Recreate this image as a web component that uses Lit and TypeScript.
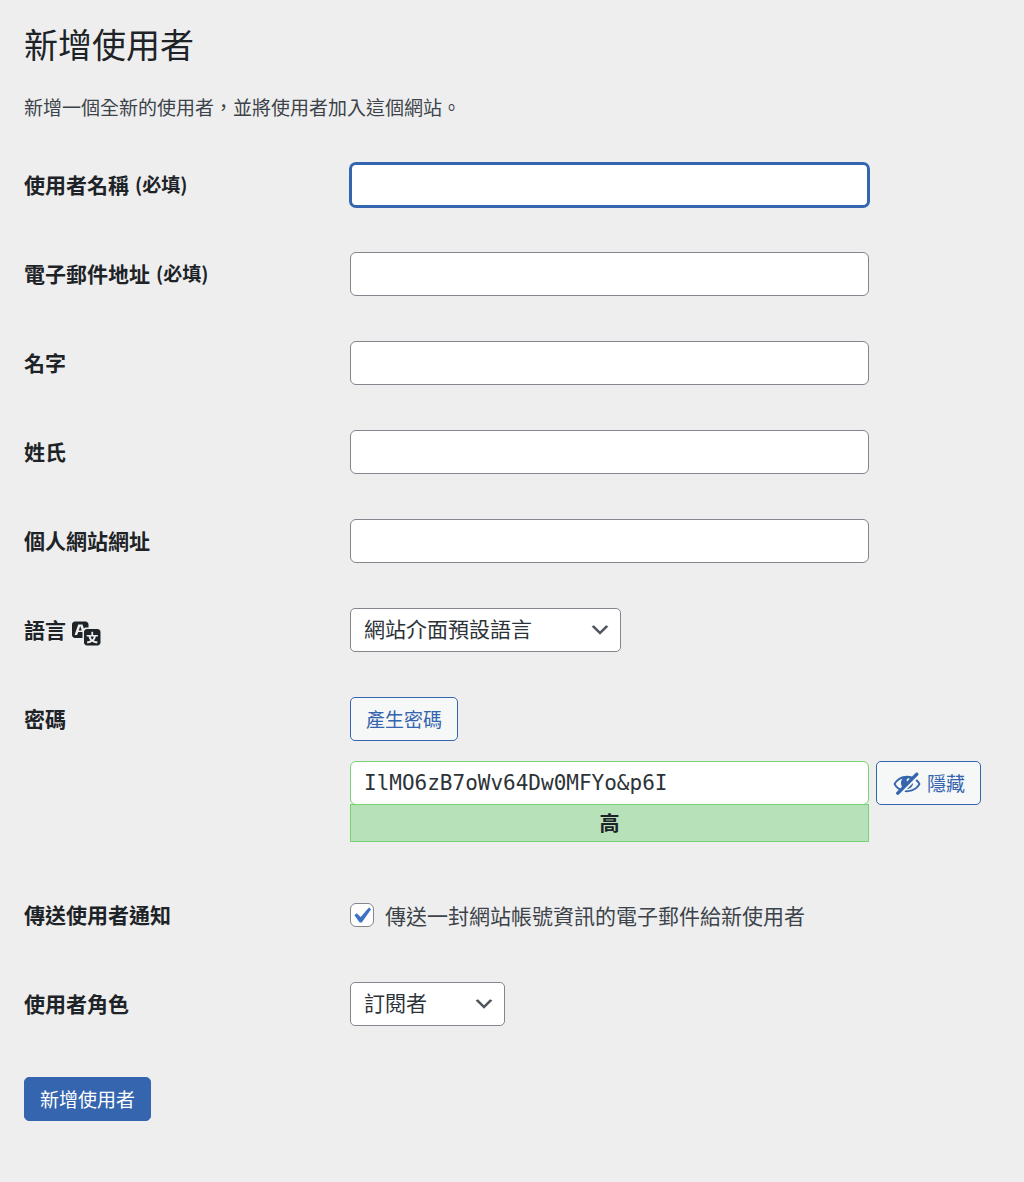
import { LitElement, html, css, svg } from "lit";
import { customElement, state } from "lit/decorators.js";
import { classMap } from "lit/directives/class-map.js";

interface TextField {
  id: string;
  label: string;
  type: string;
  required: boolean;
}

const TEXT_FIELDS: TextField[] = [
  { id: "user_login", label: "使用者名稱", type: "text", required: true },
  { id: "email", label: "電子郵件地址", type: "email", required: true },
  { id: "first_name", label: "名字", type: "text", required: false },
  { id: "last_name", label: "姓氏", type: "text", required: false },
  { id: "url", label: "個人網站網址", type: "url", required: false },
];

const translationIcon = svg`<path fill-rule="evenodd" d="M11 7H9.49c-.63 0-1.25.3-1.59.7L7 5H4.13l-2.39 7h1.69l.74-2H7v4H2c-1.1 0-2-.9-2-2V5c0-1.1.9-2 2-2h7c1.1 0 2 .9 2 2v2zM6.51 9H4.49l1-2.93zM10 8h7c1.1 0 2 .9 2 2v7c0 1.1-.9 2-2 2h-7c-1.1 0-2-.9-2-2v-7c0-1.1.9-2 2-2zm7.25 5v-1.08h-3.17V9.75h-1.16v2.17H9.75V13h1.28c.11.85.56 1.85 1.28 2.62-.87.36-1.89.62-2.31.62-.01.02.22.97.2 1.46.84 0 2.21-.5 3.28-1.15 1.09.65 2.48 1.15 3.34 1.15-.02-.49.2-1.44.2-1.46-.43 0-1.49-.27-2.38-.63.7-.77 1.14-1.77 1.25-2.61h1.36zm-3.81 1.93c-.5-.46-.85-1.13-1.01-1.93h2.09c-.17.8-.51 1.47-1 1.93l-.04.03s-.03-.02-.04-.03z"/>`;

const hiddenIcon = svg`<path d="M17.2 3.3l.16.17c.39.39.39 1.02 0 1.41L4.55 17.7c-.39.39-1.03.39-1.41 0l-.17-.17c-.39-.39-.39-1.02 0-1.41l1.59-1.6c-1.57-1-2.76-2.3-3.56-3.93.81-1.65 2.03-2.98 3.64-3.99S8.04 5.09 10 5.09c1.2 0 2.33.21 3.4.6l2.38-2.39c.39-.39 1.03-.39 1.42 0zm-7.09 4.01c-.23.25-.34.54-.34.88 0 .31.12.58.31.81l1.8-1.79c-.13-.12-.28-.21-.45-.26-.11-.01-.28-.03-.49-.04-.33.03-.6.16-.83.4zM2.4 10.59c.69 1.23 1.71 2.25 3.05 3.05l1.28-1.28c-.51-.69-.77-1.47-.77-2.36 0-1.06.36-1.98 1.09-2.76-1.04.27-1.96.7-2.76 1.26-.8.58-1.43 1.27-1.89 2.09zm13.22-2.13l.96-.96c1.02.86 1.83 1.89 2.42 3.09-.81 1.65-2.03 2.98-3.64 3.99s-3.4 1.51-5.36 1.51c-.63 0-1.24-.07-1.83-.18l1.07-1.07c.25.02.5.05.76.05 1.63 0 3.13-.4 4.5-1.21s2.4-1.84 3.1-3.09c-.46-.82-1.09-1.51-1.89-2.09-.03-.01-.06-.02-.09-.04zm-5.58 5.58l4-4c-.01 1.1-.41 2.04-1.18 2.81-.78.78-1.72 1.18-2.82 1.19z"/>`;

@customElement("app-root")
export class AppRoot extends LitElement {
  @state() private notify = true;
  @state() private activeField = "user_login";

  static styles = css`
    :host {
      display: block;
      box-sizing: border-box;
      min-height: 100vh;
      padding: 22px 24px;
      background: #eee;
      color: #3c434a;
      font-family: "Noto Sans CJK TC", sans-serif;
      font-size: 21px;
      line-height: 28px;
    }
    * {
      box-sizing: border-box;
    }
    .title {
      margin: 0;
      color: #1d2327;
      font-size: 34px;
      font-weight: 400;
      line-height: 44px;
    }
    .intro {
      margin: 27px 0 42px;
      font-size: 19px;
    }
    .rows {
      display: grid;
      gap: 45px;
    }
    .row {
      display: grid;
      grid-template-columns: minmax(0, 326px) minmax(0, 1fr);
      min-height: 44px;
    }
    .row.password {
      padding-bottom: 6px;
    }
    .label {
      display: flex;
      align-items: center;
      gap: 6px;
      height: 44px;
      padding-bottom: 3px;
      color: #1d2327;
      font-weight: 700;
    }
    .required {
      font-size: 19px;
    }
    .text {
      display: block;
      width: 100%;
      max-width: 519px;
      height: 44px;
      margin: 0;
      padding: 0 13px;
      border: 1px solid #83868c;
      border-radius: 6px;
      outline: none;
      background: #fff;
      color: #2c3338;
      font: inherit;
    }
    .text.active {
      border: 2px solid #3465ae;
      box-shadow: 0 0 0 1px #3465ae;
    }
    .picker {
      display: inline-grid;
      align-items: center;
      max-width: 100%;
    }
    .select,
    .chevron {
      grid-area: 1 / 1;
    }
    .select {
      appearance: none;
      width: 100%;
      height: 44px;
      margin: 0;
      padding: 0 40px 4px 13px;
      border: 1px solid #83868c;
      border-radius: 5px;
      background: #fff;
      color: #2c3338;
      font: inherit;
    }
    .locale {
      width: 271px;
    }
    .role {
      width: 155px;
    }
    .chevron {
      justify-self: end;
      width: 24px;
      height: 24px;
      margin-right: 9px;
      fill: #50575e;
      pointer-events: none;
    }
    .button {
      display: inline-flex;
      align-items: center;
      justify-content: center;
      gap: 5px;
      height: 44px;
      margin: 0;
      padding: 0 15px;
      border: 1px solid #3465ae;
      border-radius: 5px;
      background: #f6f7f7;
      color: #3465ae;
      font: inherit;
      font-size: 19px;
      white-space: nowrap;
      cursor: pointer;
    }
    .button.primary {
      margin-top: 51px;
      background: #3465ae;
      color: #fff;
    }
    .icon {
      flex: none;
      width: 30px;
      height: 30px;
      overflow: visible;
      fill: currentColor;
    }
    .stack {
      display: grid;
      gap: 20px;
      justify-items: start;
    }
    .secret {
      display: flex;
      gap: 7px;
      width: 100%;
    }
    .meter {
      flex: 0 1 519px;
      min-width: 0;
    }
    .text.strong {
      border-color: #78d472;
      font-family: "DejaVu Sans Mono", monospace;
    }
    .strength {
      margin-top: -1px;
      padding: 4px;
      border: 1px solid #78d472;
      background: #b7e2b9;
      color: #1d2327;
      font-size: 20px;
      font-weight: 700;
      text-align: center;
    }
    .choice {
      display: flex;
      align-items: center;
      gap: 11px;
      height: 44px;
    }
    .tick {
      display: grid;
      flex: none;
    }
    .checkbox,
    .mark {
      grid-area: 1 / 1;
      width: 24px;
      height: 24px;
    }
    .checkbox {
      appearance: none;
      margin: 0;
      border: 1px solid #83868c;
      border-radius: 6px;
      background: #fff;
    }
    .mark {
      fill: #3b72c4;
      pointer-events: none;
    }
    @media (max-width: 720px) {
      .row {
        grid-template-columns: minmax(0, 1fr);
      }
      .secret {
        flex-wrap: wrap;
      }
    }
  `;

  private chevron() {
    return html`<svg class="chevron" viewBox="0 0 20 20" aria-hidden="true">
      <path d="M5 6l5 5 5-5 2 1-7 7-7-7 2-1z" />
    </svg>`;
  }

  private textRow(field: TextField) {
    return html`<div class="row">
      <label class="label" for=${field.id}>
        <span>${field.label}</span>
        ${field.required ? html`<span class="required">(必填)</span>` : null}
      </label>
      <input
        class=${classMap({ text: true, active: this.activeField === field.id })}
        id=${field.id}
        name=${field.id}
        type=${field.type}
        ?required=${field.required}
        @focus=${() => (this.activeField = field.id)}
      />
    </div>`;
  }

  render() {
    return html`
      <h1 class="title">新增使用者</h1>
      <p class="intro">新增一個全新的使用者，並將使用者加入這個網站。</p>
      <form novalidate @submit=${(e: Event) => e.preventDefault()}>
        <div class="rows">
          ${TEXT_FIELDS.map((field) => this.textRow(field))}
          <div class="row">
            <label class="label" for="locale">
              <span>語言</span>
              <svg class="icon" viewBox="0 -2 20 20" aria-hidden="true">${translationIcon}</svg>
            </label>
            <div>
              <div class="picker locale">
                <select class="select" id="locale" name="locale">
                  <option>網站介面預設語言</option>
                </select>
                ${this.chevron()}
              </div>
            </div>
          </div>
          <div class="row password">
            <label class="label" for="pass1">密碼</label>
            <div class="stack">
              <button class="button" type="button">產生密碼</button>
              <div class="secret">
                <div class="meter">
                  <input
                    class="text strong"
                    id="pass1"
                    name="pass1"
                    type="text"
                    autocomplete="off"
                    spellcheck="false"
                    value="IlMO6zB7oWv64Dw0MFYo&amp;p6I"
                  />
                  <div class="strength">高</div>
                </div>
                <button class="button" type="button">
                  <svg class="icon" viewBox="0 0 20 20" aria-hidden="true">${hiddenIcon}</svg>
                  <span>隱藏</span>
                </button>
              </div>
            </div>
          </div>
          <div class="row">
            <div class="label">傳送使用者通知</div>
            <div class="choice">
              <span class="tick">
                <input
                  class="checkbox"
                  id="send_user_notification"
                  name="send_user_notification"
                  type="checkbox"
                  .checked=${this.notify}
                  @change=${(e: Event) => (this.notify = (e.target as HTMLInputElement).checked)}
                />
                ${this.notify
                  ? html`<svg class="mark" viewBox="3 2 15 15" aria-hidden="true">
                      <path d="M14.83 4.89l1.34.94-5.81 8.38H9.02L5.78 9.67l1.34-1.25 2.57 2.4z" />
                    </svg>`
                  : null}
              </span>
              <label for="send_user_notification">傳送一封網站帳號資訊的電子郵件給新使用者</label>
            </div>
          </div>
          <div class="row">
            <label class="label" for="role">使用者角色</label>
            <div>
              <div class="picker role">
                <select class="select" id="role" name="role">
                  <option>訂閱者</option>
                </select>
                ${this.chevron()}
              </div>
            </div>
          </div>
        </div>
        <button class="button primary" type="submit">新增使用者</button>
      </form>
    `;
  }
}
